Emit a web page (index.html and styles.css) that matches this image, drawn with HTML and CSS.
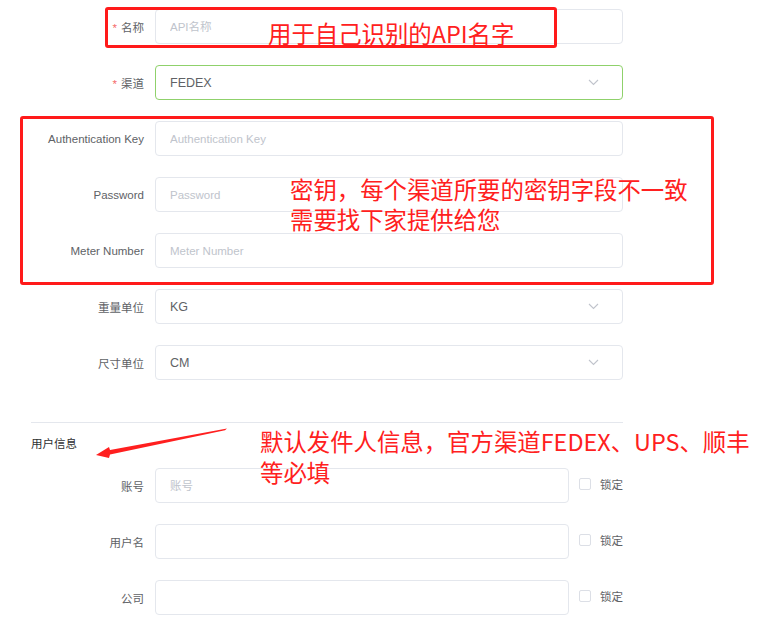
FILE: index.html
```html
<!DOCTYPE html>
<html lang="zh-CN">
<head>
<meta charset="utf-8">
<title>API 设置</title>
<link rel="stylesheet" href="styles.css">
</head>
<body>
<div class="page">
  <form class="form">
    <div class="row">
      <label class="label"><span class="req">*</span>名称</label>
      <div class="field"><input class="input" placeholder="API名称"></div>
    </div>
    <div class="row">
      <label class="label"><span class="req">*</span>渠道</label>
      <div class="field"><div class="input select focus"><span>FEDEX</span><svg class="chev" width="11" height="7" viewBox="0 0 11 7"><path d="M1 1l4.5 4.5L10 1" fill="none" stroke="#c0c4cc" stroke-width="1.1"/></svg></div></div>
    </div>
    <div class="row">
      <label class="label">Authentication Key</label>
      <div class="field"><input class="input" placeholder="Authentication Key"></div>
    </div>
    <div class="row">
      <label class="label">Password</label>
      <div class="field"><input class="input" placeholder="Password"></div>
    </div>
    <div class="row">
      <label class="label">Meter Number</label>
      <div class="field"><input class="input" placeholder="Meter Number"></div>
    </div>
    <div class="row">
      <label class="label">重量单位</label>
      <div class="field"><div class="input select"><span>KG</span><svg class="chev" width="11" height="7" viewBox="0 0 11 7"><path d="M1 1l4.5 4.5L10 1" fill="none" stroke="#c0c4cc" stroke-width="1.1"/></svg></div></div>
    </div>
    <div class="row">
      <label class="label">尺寸单位</label>
      <div class="field"><div class="input select"><span>CM</span><svg class="chev" width="11" height="7" viewBox="0 0 11 7"><path d="M1 1l4.5 4.5L10 1" fill="none" stroke="#c0c4cc" stroke-width="1.1"/></svg></div></div>
    </div>

    <div class="divider"></div>
    <div class="section-title">用户信息</div>

    <div class="row">
      <label class="label">账号</label>
      <div class="field short"><input class="input" placeholder="账号"></div>
      <div class="lock"><span class="box"></span><span class="lock-text">锁定</span></div>
    </div>
    <div class="row">
      <label class="label">用户名</label>
      <div class="field short"><input class="input"></div>
      <div class="lock"><span class="box"></span><span class="lock-text">锁定</span></div>
    </div>
    <div class="row">
      <label class="label">公司</label>
      <div class="field short"><input class="input"></div>
      <div class="lock"><span class="box"></span><span class="lock-text">锁定</span></div>
    </div>
  </form>

  <div class="note-box nb1"></div>
  <div class="note n1">用于自己识别的API名字</div>
  <div class="note-box nb2"></div>
  <div class="note n2">密钥，每个渠道所要的密钥字段不一致<br>需要找下家提供给您</div>
  <div class="note n3">默认发件人信息，官方渠道FEDEX、UPS、顺丰<br>等必填</div>
  <svg class="arrow" width="140" height="40" viewBox="0 0 140 40">
    <polygon points="134,2.5 17,24 16,21 3,29 16,32 17,28.5 132,4.3" fill="#ff1f1f"/>
  </svg>
</div>
</body>
</html>
```

FILE: styles.css
```css
* { box-sizing: border-box; }

body {
  margin: 0;
  background: #ffffff;
  font-family: "Liberation Sans", "Noto Sans CJK SC", Arial, sans-serif;
  font-size: 11.5px;
  color: #606266;
}

.page {
  position: relative;
  width: 761px;
  height: 623px;
  overflow: hidden;
  padding-top: 9px;
}

.form {
  margin-left: 31px;
  width: 592px;
}

.row {
  display: flex;
  align-items: center;
  height: 35px;
  margin-bottom: 21px;
}

.label {
  width: 124px;
  flex: none;
  padding-right: 11px;
  text-align: right;
  color: #606266;
  font-size: 11.5px;
  white-space: nowrap;
}

.req {
  color: #f56c6c;
  margin-right: 4px;
}

.field {
  flex: 1;
  height: 35px;
}

.field.short {
  flex: none;
  width: 414px;
}

.input {
  display: block;
  width: 100%;
  height: 35px;
  margin: 0;
  border: 1px solid #e4e7ed;
  border-radius: 4px;
  padding: 0 14px;
  font-family: "Liberation Sans", "Noto Sans CJK SC", Arial, sans-serif;
  font-size: 11.5px;
  color: #606266;
  background: #fff;
  outline: none;
}

.input::placeholder {
  color: #c0c4cc;
}

.select {
  display: flex;
  align-items: center;
  justify-content: space-between;
  font-size: 12.5px;
}

.select.focus {
  border-color: #8fd16b;
}

.chev {
  margin-right: 9px;
}

.divider {
  margin-top: 42px;
  border-top: 1px solid #e4e7ed;
}

.section-title {
  margin-top: 13px;
  height: 16px;
  line-height: 16px;
  margin-bottom: 16px;
  color: #303133;
  font-size: 11.5px;
}

.lock {
  flex: none;
  display: flex;
  align-items: center;
  margin-left: 10px;
  margin-bottom: 4px;
  white-space: nowrap;
}

.box {
  width: 12px;
  height: 12px;
  border: 1px solid #dcdfe6;
  border-radius: 2px;
  background: #fff;
}

.lock-text {
  margin-left: 9px;
  font-size: 11.5px;
  color: #606266;
}

/* annotations over the screenshot */
.note-box {
  position: absolute;
  border: 3px solid #ff1a1a;
  border-radius: 3px;
}

.nb1 { left: 105px; top: 7px; width: 452px; height: 41px; }
.nb2 { left: 20px; top: 116px; width: 694px; height: 169px; }

.note {
  position: absolute;
  color: #ff2020;
  font-family: "Noto Sans CJK SC", "Liberation Sans", sans-serif;
  font-size: 23.4px;
  line-height: 30px;
  white-space: nowrap;
}

.n1 { left: 268px; top: 18px; }
.n2 { left: 290px; top: 174px; }
.n3 { left: 260px; top: 426px; line-height: 30.5px; }

.arrow {
  position: absolute;
  left: 93px;
  top: 426px;
}
```
